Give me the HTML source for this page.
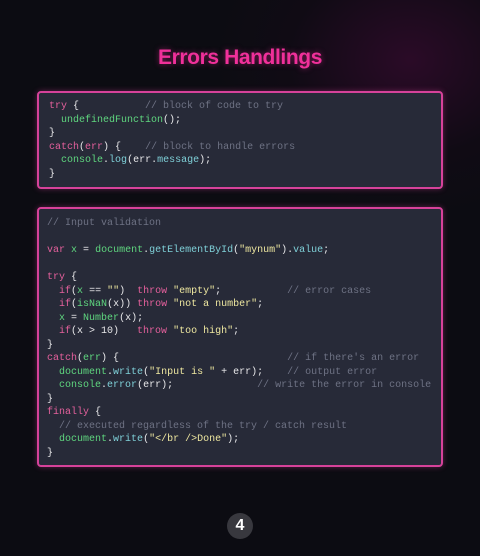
<!DOCTYPE html>
<html><head><style>
*{margin:0;padding:0;box-sizing:border-box}
body{width:480px;height:556px;overflow:hidden;background:#0c0c12;position:relative;font-family:"Liberation Sans",sans-serif}
.bg{position:absolute;inset:0;background:radial-gradient(ellipse 200px 160px at 410px 60px,rgba(80,10,65,0.45),rgba(40,5,35,0.15) 60%,transparent 100%)}
h1{position:absolute;top:46px;left:0;width:480px;text-align:center;color:#f0309a;font-size:21px;font-weight:bold;letter-spacing:-0.4px;text-shadow:0 0 6px rgba(240,48,154,0.5)}
.box{position:absolute;left:37px;width:406px;background:#272a38;border:2px solid #d6429a;border-radius:4px;box-shadow:0 0 6px rgba(214,66,154,0.4)}
pre{font-family:"Liberation Mono",monospace;font-size:10px;line-height:13.5px;color:#e8e8ea;position:absolute}
.k{color:#e4609c}.f{color:#5fd67f}.c{color:#6e7284}.s{color:#eee7a0}.p{color:#7fd0d8}
.num{position:absolute;left:227px;top:513px;width:26px;height:26px;border-radius:50%;background:#38383e;color:#fff;font-weight:bold;font-size:16px;text-align:center;line-height:26px}
</style></head><body>
<div class="bg"></div>
<h1>Errors Handlings</h1>
<div class="box" style="top:91px;height:98px">
<pre style="left:10px;top:7px"><span class="k">try</span> {           <span class="c">// block of code to try</span>
  <span class="f">undefinedFunction</span>();
}
<span class="k">catch</span>(<span class="k">err</span>) {    <span class="c">// block to handle errors</span>
  <span class="f">console</span>.<span class="p">log</span>(err.<span class="p">message</span>);
}</pre>
</div>
<div class="box" style="top:207px;height:260px">
<pre style="left:8px;top:8px"><span class="c">// Input validation</span>

<span class="k">var</span> <span class="f">x</span> = <span class="f">document</span>.<span class="p">getElementById</span>(<span class="s">"mynum"</span>).<span class="p">value</span>;

<span class="k">try</span> {
  <span class="k">if</span>(<span class="f">x</span> == <span class="s">""</span>)  <span class="k">throw</span> <span class="s">"empty"</span>;           <span class="c">// error cases</span>
  <span class="k">if</span>(<span class="f">isNaN</span>(x)) <span class="k">throw</span> <span class="s">"not a number"</span>;
  <span class="f">x</span> = <span class="f">Number</span>(x);
  <span class="k">if</span>(x &gt; 10)   <span class="k">throw</span> <span class="s">"too high"</span>;
}
<span class="k">catch</span>(<span class="f">err</span>) {                            <span class="c">// if there's an error</span>
  <span class="f">document</span>.<span class="p">write</span>(<span class="s">"Input is "</span> + err);    <span class="c">// output error</span>
  <span class="f">console</span>.<span class="p">error</span>(err);              <span class="c">// write the error in console</span>
}
<span class="k">finally</span> {
  <span class="c">// executed regardless of the try / catch result</span>
  <span class="f">document</span>.<span class="p">write</span>(<span class="s">"&lt;/br /&gt;Done"</span>);
}</pre>
</div>
<div class="num">4</div>
</body></html>
